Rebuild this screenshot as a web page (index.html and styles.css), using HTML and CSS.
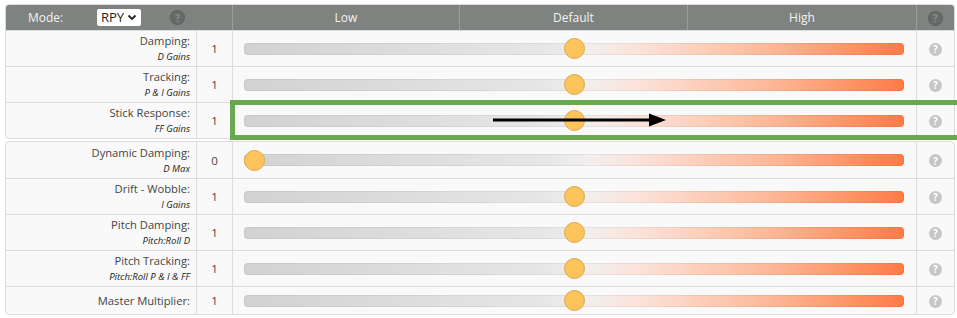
FILE: index.html
```html
<!DOCTYPE html>
<html lang="en">
<head>
  <meta charset="UTF-8" />
  <meta name="viewport" content="width=device-width,initial-scale=1.0" />
  <title>PID Tuning Sliders</title>
  <link rel="stylesheet" href="styles.css">
</head>
<body>
  <div class="tuning">
    <!-- main sliders -->
    <table class="sliders">
      <colgroup><col class="c-label"><col class="c-value"><col class="c-low"><col class="c-def"><col class="c-high"><col class="c-help"></colgroup>
      <thead>
        <tr>
          <th colspan="2">
            <div class="mode">
              <span class="mode-label">Mode:</span>
              <span class="mode-select">RPY
                <svg width="10" height="7" viewBox="0 0 10 7"><path d="M1.5 1.5 5 5 8.5 1.5" fill="none" stroke="#222" stroke-width="1.8"/></svg>
              </span>
              <span class="help dark">?</span>
            </div>
          </th>
          <th>Low</th>
          <th>Default</th>
          <th>High</th>
          <th><span class="help dark">?</span></th>
        </tr>
      </thead>
      <tbody>
        <tr>
          <td class="name">Damping:<em>D Gains</em></td>
          <td class="value">1</td>
          <td colspan="3" class="slider"><input type="range" min="0" max="2" step="0.05" value="1"></td>
          <td class="hint"><span class="help">?</span></td>
        </tr>
        <tr>
          <td class="name">Tracking:<em>P &amp; I Gains</em></td>
          <td class="value">1</td>
          <td colspan="3" class="slider"><input type="range" min="0" max="2" step="0.05" value="1"></td>
          <td class="hint"><span class="help">?</span></td>
        </tr>
        <tr>
          <td class="name">Stick Response:<em>FF Gains</em></td>
          <td class="value">1</td>
          <td colspan="3" class="slider"><input type="range" min="0" max="2" step="0.05" value="1"></td>
          <td class="hint"><span class="help">?</span></td>
        </tr>
      </tbody>
    </table>

    <!-- secondary sliders -->
    <table class="sliders extra">
      <colgroup><col class="c-label"><col class="c-value"><col class="c-slide"><col class="c-help"></colgroup>
      <tbody>
        <tr>
          <td class="name">Dynamic Damping:<em>D Max</em></td>
          <td class="value">0</td>
          <td class="slider"><input type="range" min="0" max="2" step="0.05" value="0"></td>
          <td class="hint"><span class="help">?</span></td>
        </tr>
        <tr>
          <td class="name">Drift - Wobble:<em>I Gains</em></td>
          <td class="value">1</td>
          <td class="slider"><input type="range" min="0" max="2" step="0.05" value="1"></td>
          <td class="hint"><span class="help">?</span></td>
        </tr>
        <tr>
          <td class="name">Pitch Damping:<em>Pitch:Roll D</em></td>
          <td class="value">1</td>
          <td class="slider"><input type="range" min="0" max="2" step="0.05" value="1"></td>
          <td class="hint"><span class="help">?</span></td>
        </tr>
        <tr>
          <td class="name">Pitch Tracking:<em>Pitch:Roll P &amp; I &amp; FF</em></td>
          <td class="value">1</td>
          <td class="slider"><input type="range" min="0" max="2" step="0.05" value="1"></td>
          <td class="hint"><span class="help">?</span></td>
        </tr>
        <tr class="short">
          <td class="name">Master Multiplier:</td>
          <td class="value">1</td>
          <td class="slider"><input type="range" min="0" max="2" step="0.05" value="1"></td>
          <td class="hint"><span class="help">?</span></td>
        </tr>
      </tbody>
    </table>

    <!-- annotation -->
    <div class="highlight"></div>
    <svg class="arrow" width="176" height="16" viewBox="0 0 176 16">
      <line x1="0" y1="8" x2="160" y2="8" stroke="#000" stroke-width="3"/>
      <polygon points="156,1.5 173,8 156,14.5" fill="#000"/>
    </svg>
  </div>
</body>
</html>
```

FILE: styles.css
```css
:root{
  --head-bg:#7e837f;
  --cell-bg:#f9f9f9;
  --line:#dcdcdc;
  --text:#444;
  --help:#c6c6c6;
  --green:#6aa84f;
}
*{box-sizing:border-box;margin:0;padding:0}
body{font-family:"Open Sans",Arial,sans-serif;background:#fff;color:var(--text);font-size:11px}
.tuning{position:relative;width:950px;margin:4px 0 0 5px}

/* tables */
.sliders{width:100%;border-collapse:separate;border-spacing:0;table-layout:fixed;background:var(--cell-bg);border:1px solid var(--line);border-radius:4px;overflow:hidden}
.sliders.extra{margin-top:2px}
.c-label{width:190px}
.c-value{width:36px}
.c-low{width:227px}
.c-def{width:228px}
.c-high{width:229px}
.c-slide{width:684px}
.c-help{width:38px}
th{background:var(--head-bg);color:#f2f2f2;font-weight:normal;font-size:12px;height:25px;border-left:1px solid #9a9e9b;text-align:center}
th:first-child{border-left:none}
td{border-left:1px solid var(--line);border-top:1px solid var(--line);height:36px;vertical-align:middle}
td:first-child{border-left:none}
.extra tr:first-child td{border-top:none}
tr.short td{height:28px}

/* header mode selector */
.mode{display:flex;align-items:center;padding-left:22px}
.mode-label{font-size:12px;width:69px;text-align:left}
.mode-select{display:flex;align-items:center;gap:3px;background:#fff;color:#1e1e1e;font-size:13px;height:17px;padding:0 4px;border-radius:2px;line-height:17px}
.mode .help{margin-left:30px}

/* cells */
.name{text-align:right;padding-right:6px;font-size:11.2px;line-height:17px}
.name em{display:block;font-size:9.5px;line-height:16px;color:#222}
.value{text-align:center;font-size:11.5px}
.slider{padding:0 12px 0 11px}
.hint{text-align:center}

.help{display:inline-flex;align-items:center;justify-content:center;width:13px;height:13px;border-radius:50%;background:var(--help);color:#fff;font-size:10px;font-weight:bold;line-height:1}
.help.dark{background:#676b68;color:#8a8e8b;box-shadow:0 0 0 1px #5e625f}

/* range inputs */
input[type=range]{-webkit-appearance:none;appearance:none;display:block;width:100%;height:22px;background:transparent;outline:none}
input[type=range]::-webkit-slider-runnable-track{height:12px;border-radius:4px;box-shadow:inset 0 0 0 1px rgba(0,0,0,.05);background:linear-gradient(to right,#d2d2d2 0%,#e6e6e6 45%,#f1efee 52%,#fbe2d8 60%,#fdb797 80%,#ff7a45 100%)}
input[type=range]::-webkit-slider-thumb{-webkit-appearance:none;width:21px;height:21px;border-radius:50%;background:#fdc45b;border:1px solid #dca752;margin-top:-4.5px}

/* annotation overlay */
.highlight{position:absolute;left:225px;top:96px;width:740px;height:40px;border:5px solid var(--green)}
.arrow{position:absolute;left:488px;top:108px}
```
